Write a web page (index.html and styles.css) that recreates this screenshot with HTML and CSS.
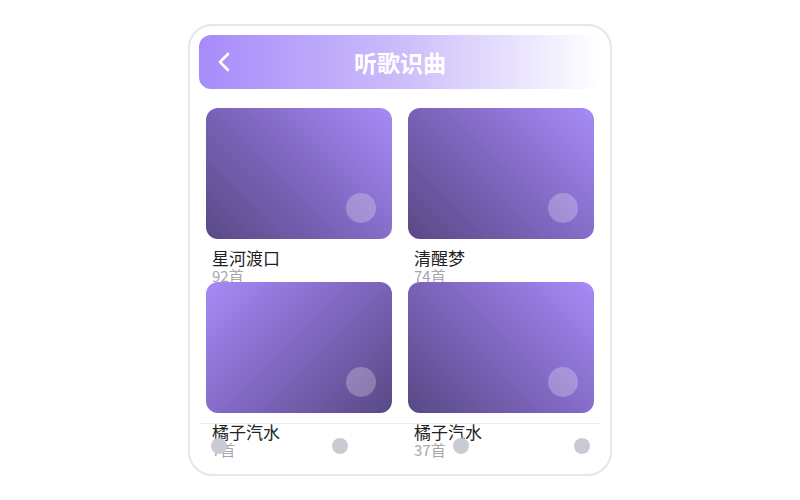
FILE: index.html
```html
<!doctype html>
<html lang="zh">
<head>
  <meta charset="utf-8">
  <title>听歌识曲</title>
  <link rel="stylesheet" href="styles.css">
</head>
<body>

<div class="phone">
  <div class="header">
    <div class="back">
      <svg width="14" height="20" viewBox="0 0 14 20"><path d="M11 2 L3 10 L11 18" fill="none" stroke="#fff" stroke-width="2.6" stroke-linecap="round" stroke-linejoin="round"/></svg>
    </div>
    <div class="title">听歌识曲</div>
    <div></div>
  </div>

  <div class="grid">
    <div class="item">
      <div class="cover"><span class="dot"></span></div>
      <div class="name">星河渡口</div>
      <div class="count">92首</div>
    </div>
    <div class="item">
      <div class="cover"><span class="dot"></span></div>
      <div class="name">清醒梦</div>
      <div class="count">74首</div>
    </div>
    <div class="item">
      <div class="cover alt"><span class="dot"></span></div>
      <div class="name">橘子汽水</div>
      <div class="count">7首</div>
    </div>
    <div class="item">
      <div class="cover"><span class="dot"></span></div>
      <div class="name">橘子汽水</div>
      <div class="count">37首</div>
    </div>
  </div>

  <div class="tabbar">
    <span class="tab"></span>
    <span class="tab"></span>
    <span class="tab"></span>
    <span class="tab"></span>
  </div>
</div>

</body>
</html>
```

FILE: styles.css
```css
html, body {
  margin: 0;
  height: 100%;
}
body {
  font-family: "Noto Sans CJK SC", "Noto Sans", sans-serif;
  background: #fff;
  display: flex;
  align-items: center;
  justify-content: center;
}
.phone {
  position: relative;
  width: 402px;
  height: 430px;
  padding: 9px;
  border: 2px solid #e6e6ec;
  border-radius: 24px;
  overflow: hidden;
}
.header {
  height: 54px;
  border-radius: 12px;
  background: linear-gradient(90deg, #a78bfa 0%, #cbbcfb 50%, #ffffff 100%);
  display: grid;
  grid-template-columns: 1fr auto 1fr;
  align-items: center;
  padding: 0 16px;
}
.back {
  display: flex;
  align-items: center;
  padding-left: 2px;
}
.title {
  color: #fff;
  font-size: 23px;
  font-weight: 700;
  line-height: 28px;
}
.grid {
  display: grid;
  grid-template-columns: 1fr 1fr;
  grid-auto-rows: 174px;
  column-gap: 16px;
  padding: 19px 7px 0;
}
.cover {
  position: relative;
  height: 131px;
  border-radius: 12px;
  background: linear-gradient(225deg, #a78bf7 0%, #7f67c0 50%, #594985 100%);
  margin-bottom: 9px;
}
.cover.alt {
  background: linear-gradient(135deg, #a78bf7 0%, #7f67c0 50%, #594985 100%);
}
.dot {
  position: absolute;
  right: 16px;
  bottom: 16px;
  width: 30px;
  height: 30px;
  border-radius: 50%;
  background: rgba(255, 255, 255, 0.25);
}
.name {
  padding-left: 6px;
  font-size: 17px;
  line-height: 20px;
  color: #222;
}
.count {
  padding-left: 6px;
  font-size: 15px;
  line-height: 15px;
  color: #a4a8ae;
}
.tabbar {
  position: absolute;
  left: 9px;
  right: 9px;
  bottom: 6px;
  height: 44px;
  border-top: 1px solid #ececf0;
  display: flex;
  align-items: center;
  justify-content: space-between;
  padding: 0 11px 0 12px;
}
.tab {
  width: 16px;
  height: 16px;
  border-radius: 50%;
  background: #c8ccd2;
}
```
